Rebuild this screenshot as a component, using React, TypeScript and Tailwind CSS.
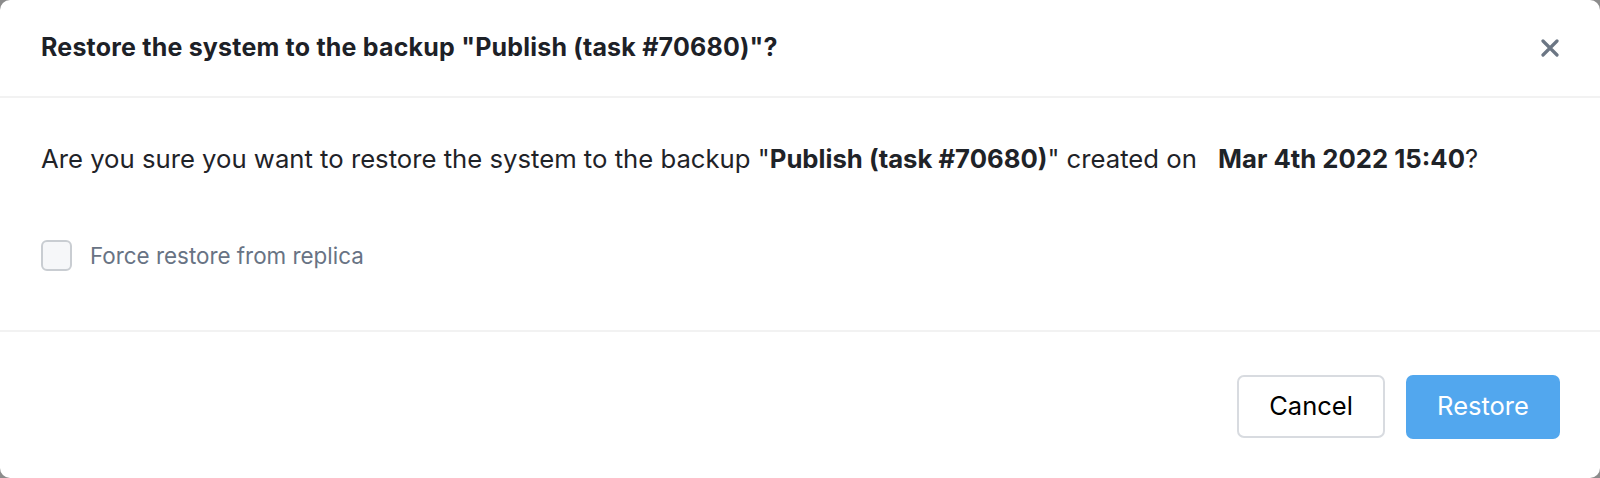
import { useState } from 'react'

export default function App() {
  const [force, setForce] = useState(false)

  return (
    <div className="h-[478px] w-full bg-[#8c8c8c]" style={{ fontFamily: 'Inter, "Open Sans", sans-serif' }}>
      <div className="flex h-full w-full flex-col rounded-[10px] bg-white">
        {/* Header */}
        <div className="flex h-[98px] items-center justify-between border-b-2 border-[#f2f2f2] pl-[41px] pr-[41px]">
          <h2 className="text-[25px] font-bold tracking-[0.2px] text-[#1d2127]">
            Restore the system to the backup "Publish (task #70680)"?
          </h2>
          <button className="flex h-[18px] w-[18px] items-center justify-center text-[#6b7684]">
            <svg width="18" height="18" viewBox="0 0 18 18" fill="none">
              <path d="M2 2L16 16M16 2L2 16" stroke="currentColor" strokeWidth="3.2" strokeLinecap="round" />
            </svg>
          </button>
        </div>

        {/* Body */}
        <div className="flex h-[234px] flex-col border-b-2 border-[#f2f2f2] px-[41px] pt-[45px]">
          <p className="text-[25.7px] leading-[32px] text-[#1f2328]">
            Are you sure you want to restore the system to the backup "<b>Publish (task #70680)</b>" created on{' '}
            <span className="ml-[14px] font-bold">Mar 4th 2022 15:40</span>?
          </p>
          <label className="mt-[64px] flex cursor-pointer items-center gap-[18px]">
            <span
              onClick={() => setForce(!force)}
              className="h-[31px] w-[31px] rounded-[6px] border-2 border-[#c9cdd2] bg-[#f6f7f9]"
            />
            <span className="text-[22.4px] text-[#687384]">Force restore from replica</span>
          </label>
        </div>

        {/* Footer */}
        <div className="flex flex-1 items-center justify-end gap-[21px] px-[40px] pt-[3px]">
          <button className="h-[63px] w-[148px] rounded-[7px] border-2 border-[#d8dbe0] bg-white text-[25.5px] text-black">
            Cancel
          </button>
          <button className="h-[64px] w-[154px] rounded-[7px] bg-[#52a7ee] text-[25.5px] text-white">
            Restore
          </button>
        </div>
      </div>
    </div>
  )
}
